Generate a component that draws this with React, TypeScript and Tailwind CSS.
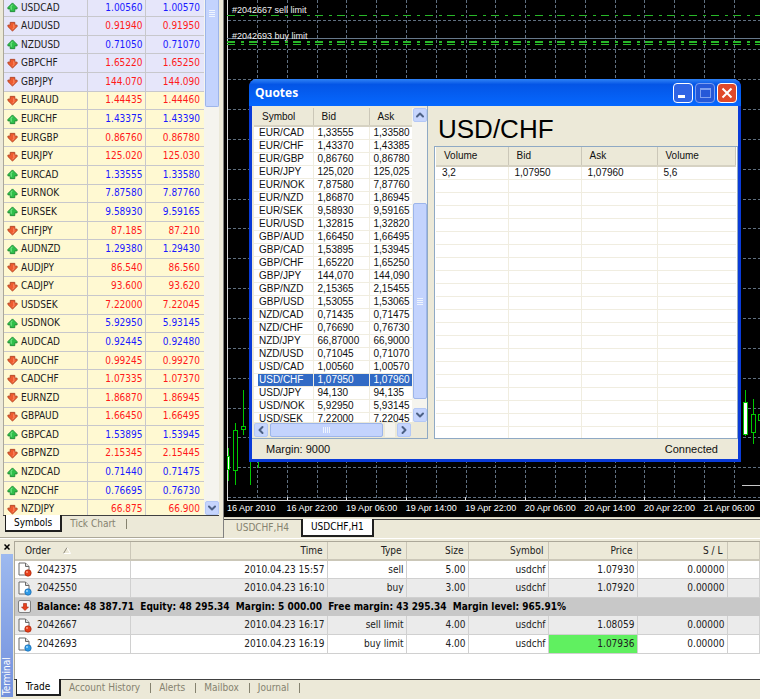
import clsx from "clsx";
import { ReactNode } from "react";
import {
  FiChevronDown,
  FiChevronLeft,
  FiChevronRight,
  FiChevronUp,
} from "react-icons/fi";

type Direction = "up" | "down";

interface WatchRow {
  symbol: string;
  bid: string;
  ask: string;
  dir: Direction;
}

interface Order {
  id: string;
  time: string;
  type: string;
  size: string;
  price: string;
  side: "sell" | "buy";
  hit?: boolean;
}

const up = (symbol: string, bid: string, ask: string): WatchRow => ({
  symbol,
  bid,
  ask,
  dir: "up",
});
const down = (symbol: string, bid: string, ask: string): WatchRow => ({
  symbol,
  bid,
  ask,
  dir: "down",
});

const majors = [
  up("USDCAD", "1.00560", "1.00570"),
  down("AUDUSD", "0.91940", "0.91950"),
  up("NZDUSD", "0.71050", "0.71070"),
  down("GBPCHF", "1.65220", "1.65250"),
  down("GBPJPY", "144.070", "144.090"),
];

const crosses = [
  down("EURAUD", "1.44435", "1.44460"),
  up("EURCHF", "1.43375", "1.43390"),
  down("EURGBP", "0.86760", "0.86780"),
  down("EURJPY", "125.020", "125.030"),
  up("EURCAD", "1.33555", "1.33580"),
  up("EURNOK", "7.87580", "7.87760"),
  up("EURSEK", "9.58930", "9.59165"),
  down("CHFJPY", "87.185", "87.210"),
  up("AUDNZD", "1.29380", "1.29430"),
  down("AUDJPY", "86.540", "86.560"),
  down("CADJPY", "93.600", "93.620"),
  down("USDSEK", "7.22000", "7.22045"),
  up("USDNOK", "5.92950", "5.93145"),
  up("AUDCAD", "0.92445", "0.92480"),
  down("AUDCHF", "0.99245", "0.99270"),
  down("CADCHF", "1.07335", "1.07370"),
  down("EURNZD", "1.86870", "1.86945"),
  down("GBPAUD", "1.66450", "1.66495"),
  up("GBPCAD", "1.53895", "1.53945"),
  down("GBPNZD", "2.15345", "2.15445"),
  up("NZDCAD", "0.71440", "0.71475"),
  up("NZDCHF", "0.76695", "0.76730"),
  down("NZDJPY", "66.875", "66.900"),
];

const quotes = [
  ["EUR/CAD", "1,33555", "1,33580"],
  ["EUR/CHF", "1,43370", "1,43385"],
  ["EUR/GBP", "0,86760", "0,86780"],
  ["EUR/JPY", "125,020", "125,025"],
  ["EUR/NOK", "7,87580", "7,87760"],
  ["EUR/NZD", "1,86870", "1,86945"],
  ["EUR/SEK", "9,58930", "9,59165"],
  ["EUR/USD", "1,32815", "1,32820"],
  ["GBP/AUD", "1,66450", "1,66495"],
  ["GBP/CAD", "1,53895", "1,53945"],
  ["GBP/CHF", "1,65220", "1,65250"],
  ["GBP/JPY", "144,070", "144,090"],
  ["GBP/NZD", "2,15365", "2,15455"],
  ["GBP/USD", "1,53055", "1,53065"],
  ["NZD/CAD", "0,71435", "0,71475"],
  ["NZD/CHF", "0,76690", "0,76730"],
  ["NZD/JPY", "66,87000", "66,9000"],
  ["NZD/USD", "0,71045", "0,71070"],
  ["USD/CAD", "1,00560", "1,00570"],
  ["USD/CHF", "1,07950", "1,07960"],
  ["USD/JPY", "94,130", "94,135"],
  ["USD/NOK", "5,92950", "5,93145"],
  ["USD/SEK", "7,22000", "7,22045"],
];

const positions: Order[] = [
  { id: "2042375", time: "2010.04.23 15:57", type: "sell", size: "5.00", price: "1.07930", side: "sell" },
  { id: "2042550", time: "2010.04.23 16:10", type: "buy", size: "3.00", price: "1.07920", side: "buy" },
];

const pending: Order[] = [
  { id: "2042667", time: "2010.04.23 16:17", type: "sell limit", size: "4.00", price: "1.08059", side: "sell" },
  { id: "2042693", time: "2010.04.23 16:19", type: "buy limit", size: "4.00", price: "1.07936", side: "buy", hit: true },
];

const timeLabels = [
  "16 Apr 2010",
  "16 Apr 22:00",
  "19 Apr 06:00",
  "19 Apr 14:00",
  "19 Apr 22:00",
  "20 Apr 06:00",
  "20 Apr 14:00",
  "20 Apr 22:00",
  "21 Apr 06:00",
];

const range = (n: number) => Array.from({ length: n }, (_, i) => i);

const ArrowIcon = ({ dir }: { dir: Direction }) => (
  <svg viewBox="0 0 12 12" className="block size-[11px]">
    <g transform={dir === "down" ? "rotate(180 6 6)" : undefined}>
      <path
        d="M6 1 L11 6 V7.5 H8.5 V10.5 H3.5 V7.5 H1 V6 Z"
        fill={dir === "up" ? "#2fc04a" : "#ee5a2e"}
        stroke={dir === "up" ? "#1f8a35" : "#b0401f"}
        strokeWidth="1"
        strokeLinejoin="round"
      />
      <path
        d="M6 3 L4.5 4.6 V8.5"
        fill="none"
        stroke={dir === "up" ? "#8df09c" : "#ff9a78"}
        strokeWidth="1"
      />
    </g>
  </svg>
);

const OrderIcon = ({ side }: { side: "sell" | "buy" }) => (
  <svg viewBox="0 0 14 15" className="block h-[15px] w-3.5">
    <path
      d="M1 1 H7.5 L11 4.5 V13 H1 Z"
      fill="#fff"
      stroke="#6b6b6b"
      strokeWidth="1"
      strokeLinejoin="round"
    />
    <path d="M7.5 1 V4.5 H11" fill="#ddd" stroke="#6b6b6b" strokeWidth="1" />
    <circle
      cx="10"
      cy="11"
      r="3.2"
      fill={side === "sell" ? "#e8401c" : "#2e9ae6"}
      stroke={side === "sell" ? "#a52408" : "#1565ad"}
      strokeWidth="0.7"
    />
    <circle cx="9" cy="10" r="1" fill={side === "sell" ? "#ff9d80" : "#a4dcff"} />
  </svg>
);

const ScrollButton = ({ label, children }: { label: string; children: ReactNode }) => (
  <button
    aria-label={label}
    className="flex size-[14px] shrink-0 items-center justify-center rounded-xs border border-[#b4c8f6] bg-[#c6d5fd] text-[#4d6185]"
  >
    {children}
  </button>
);

interface TabsProps {
  active: string;
  others: string[];
}

const PanelTabs = ({ active, others }: TabsProps) => (
  <div className="flex h-[18px] items-start border-t border-[#404040] pl-0.5 text-[10px] leading-[16px]">
    <button className="-mt-px h-[17px] min-w-[45px] border-r-2 border-b-2 border-l border-[#202020] bg-white px-2 text-black">
      {active}
    </button>
    {others.map((tab) => (
      <button
        key={tab}
        className="flex items-center pl-2 text-[#85826f] after:ml-2.5 after:h-2.5 after:w-px after:bg-[#85826f]"
      >
        {tab}
      </button>
    ))}
  </div>
);

const WatchRows = ({ rows, className }: { rows: WatchRow[]; className: string }) => (
  <tbody className={className}>
    {rows.map(({ symbol, bid, ask, dir }) => (
      <tr
        key={symbol}
        className={clsx(
          "border-b border-[#c8c8cc]",
          dir === "up" ? "text-[#1a1aff]" : "text-[#ff1a1a]"
        )}
      >
        <td className="border-r border-[#c8c8cc] p-0 text-[#202020]">
          <div className="flex items-center gap-[3px] pl-[3px]">
            <ArrowIcon dir={dir} /> {symbol}
          </div>
        </td>
        <td className="border-r border-[#c8c8cc] p-0 pr-0.5 text-right">{bid}</td>
        <td className="p-0 pr-1 text-right">{ask}</td>
      </tr>
    ))}
  </tbody>
);

const MarketWatch = () => (
  <section className="flex w-[223px] shrink-0 flex-col border-b border-[#aca899] pr-1 pb-1 pl-[3px]">
    <div className="flex min-h-0 flex-1 overflow-hidden border-l border-[#aca899]">
      <div className="min-w-0 flex-1 overflow-hidden bg-[#fff9d2]">
        <table className="-mt-px h-[520px] w-full table-fixed border-collapse text-[10px] leading-[12px]">
          <colgroup>
            <col className="w-[83px]" />
            <col className="w-[58px]" />
            <col />
          </colgroup>
          <WatchRows rows={majors} className="bg-[#e6e6fa]" />
          <WatchRows rows={crosses} className="bg-[#fff9d2]" />
        </table>
      </div>
      <div className="flex w-[15px] flex-col items-center bg-[#f5f4ee]">
        <div className="flex h-[107px] w-3.5 items-start justify-center rounded-b-xs border-x border-b border-[#9db5ea] bg-[#c3d3fd] pt-2.5">
          <div className="flex flex-col gap-px">
            {range(4).map((i) => (
              <i key={i} className="h-px w-1.5 bg-[#eef4fe]" />
            ))}
          </div>
        </div>
        <div className="flex-1" />
        <ScrollButton label="Scroll down">
          <FiChevronDown size={12} strokeWidth={4} />
        </ScrollButton>
      </div>
    </div>
    <PanelTabs active="Symbols" others={["Tick Chart"]} />
  </section>
);

const ChartPlot = () => (
  <svg className="absolute inset-0 size-full" shapeRendering="crispEdges">
    <g stroke="#5f6f80" strokeWidth="1" strokeDasharray="3 2">
      {range(18).map((i) => {
        const x = Math.round(30 + i * 29.8) + 0.5;
        return <line key={x} x1={x} y1="0" x2={x} y2="499" />;
      })}
      {range(17).map((i) => {
        const y = Math.round(19.5 + i * 29.85) + 0.5;
        return <line key={y} x1="1" y1={y} x2="100%" y2={y} />;
      })}
    </g>
    <line x1="0.5" y1="0" x2="0.5" y2="100%" stroke="#d8d8d8" />
    <g stroke="#28b828">
      <line x1="0" y1="15.5" x2="100%" y2="15.5" strokeDasharray="8 6 3 5" />
      <line x1="0" y1="42" x2="100%" y2="42" strokeWidth="2" strokeDasharray="8 6 3 5" />
      <line x1="0" y1="44.5" x2="100%" y2="44.5" strokeWidth="1" strokeDasharray="8 6 3 5" />
    </g>
    <line x1="0" y1="38.5" x2="100%" y2="38.5" stroke="#66788a" />
    <g stroke="#00c800" fill="#000">
      <path d="M1.5 448 V481 M8.5 423 V485 M16.5 390 V435 M23.5 455 V485 M31.5 455 V468" />
      <rect x="0.5" y="456.5" width="2" height="13" fill="#fff" />
      <rect x="6.5" y="430.5" width="4" height="40" />
      <rect x="14.5" y="426.5" width="4" height="3" />
      <path d="M518.5 390 V436 M526.5 399 V444" />
      <rect x="516.5" y="402.5" width="4" height="32" fill="#fff" />
      <rect x="524.5" y="414.5" width="4" height="18" />
      <rect x="531.5" y="414.5" width="4" height="6" />
    </g>
    <line x1="515" y1="485.5" x2="100%" y2="485.5" stroke="#c8c8c8" />
    {/* ticks of the time axis */}
    <g stroke="#d8d8d8">
      {range(9).map((i) => {
        const x = Math.round(i * 59.6) + 0.5;
        return <line key={x} x1={x} y1="497" x2={x} y2="100%" />;
      })}
    </g>
    <g fill="#f0f0f0" fontSize="9" fontFamily="'Liberation Sans', sans-serif">
      <text x="5" y="13">#2042667 sell limit</text>
      <text x="5" y="39">#2042693 buy limit</text>
    </g>
  </svg>
);

const headCell = "border-r border-[#cbc7b8] p-0 text-left font-normal";

const QuotesList = () => (
  <div className="flex w-[176px] shrink-0 flex-col border-r border-b border-[#8fa9c4] pt-0.5 pl-0.5">
    <div className="flex min-h-0 flex-1 overflow-hidden">
      <div className="min-w-0 flex-1 overflow-hidden bg-white">
        <table className="w-full table-fixed border-collapse">
          <colgroup>
            <col className="w-[59px]" />
            <col className="w-14" />
            <col />
          </colgroup>
          <thead className="bg-[#ece9d8]">
            <tr className="h-[18px] border-b-2 border-[#d6d2c2]">
              <th className={clsx(headCell, "pl-2")}>Symbol</th>
              <th className={clsx(headCell, "pl-2")}>Bid</th>
              <th className="p-0 pl-2 text-left font-normal">Ask</th>
            </tr>
          </thead>
          <tbody>
            {quotes.map(([symbol, bid, ask]) => {
              const selected = symbol === "USD/CHF";
              return (
                <tr
                  key={symbol}
                  className={clsx(
                    "h-[13px] border-b border-[#f0ede0]",
                    selected && "text-white"
                  )}
                >
                  <td className="border-r border-[#f0ede0] p-0 pl-1">
                    <div className={clsx("pl-px", selected && "bg-[#316ac5]")}>{symbol}</div>
                  </td>
                  <td className={clsx("border-r border-[#f0ede0] p-0 pl-1", selected && "bg-[#316ac5]")}>
                    {bid}
                  </td>
                  <td className={clsx("p-0 pl-1 whitespace-nowrap", selected && "bg-[#316ac5]")}>
                    {ask}
                  </td>
                </tr>
              );
            })}
          </tbody>
        </table>
      </div>
      <div className="flex w-[15px] flex-col items-center bg-[#f5f4ee]">
        <ScrollButton label="Scroll up">
          <FiChevronUp size={12} strokeWidth={4} />
        </ScrollButton>
        <div className="grow-[81] basis-0" />
        <div className="flex w-3.5 grow-[193] basis-0 flex-col items-center justify-center gap-px rounded-xs border border-[#9db5ea] bg-[#c3d3fd]">
          {range(4).map((i) => (
            <i key={i} className="h-px w-1.5 bg-[#eef4fe]" />
          ))}
        </div>
        <div className="grow-[9] basis-0" />
        <ScrollButton label="Scroll down">
          <FiChevronDown size={12} strokeWidth={4} />
        </ScrollButton>
      </div>
    </div>
    <div className="flex h-4 items-center gap-0.5 pr-4">
      <ScrollButton label="Scroll left">
        <FiChevronLeft size={12} strokeWidth={4} />
      </ScrollButton>
      <div className="flex h-3.5 grow-[10] items-center justify-center gap-px rounded-xs border border-[#9db5ea] bg-[#c3d3fd]">
        {range(4).map((i) => (
          <i key={i} className="h-1.5 w-px bg-[#eef4fe]" />
        ))}
      </div>
      <div className="h-3.5 grow bg-[#f5f4ee]" />
      <ScrollButton label="Scroll right">
        <FiChevronRight size={12} strokeWidth={4} />
      </ScrollButton>
    </div>
  </div>
);

const Depth = () => (
  <div className="flex min-w-0 flex-1 flex-col pl-1.5">
    <h2 className="flex h-10 items-end pl-1 text-[26px] leading-[34px] text-black">
      USD/CHF
    </h2>
    <div className="min-h-0 flex-1 overflow-hidden border border-[#8fa9c4] bg-white px-px">
      <table className="w-full table-fixed border-collapse">
        <colgroup>
          <col className="w-[72px]" />
          <col className="w-[73px]" />
          <col className="w-[76px]" />
          <col />
        </colgroup>
        <thead className="bg-[#ece9d8]">
          <tr className="h-[19px] border-b-2 border-[#d6d2c2]">
            {["Volume", "Bid", "Ask", "Volume"].map((name, i) => (
              <th key={i} className={clsx(headCell, "pl-2")}>
                {name}
              </th>
            ))}
          </tr>
        </thead>
        <tbody>
          {range(22).map((row) => (
            <tr key={row} className="h-[13px] border-b border-[#f0ede0]">
              {["3,2", "1,07950", "1,07960", "5,6"].map((value, i) => (
                <td key={i} className="border-r border-[#f0ede0] p-0 pl-1.5 last:border-r-0">
                  {row === 0 && value}
                </td>
              ))}
            </tr>
          ))}
        </tbody>
      </table>
    </div>
  </div>
);

const QuotesWindow = () => (
  <section className="absolute top-[79px] right-[19px] bottom-[38px] left-[22px] flex flex-col rounded-t-lg border-x-3 border-b-3 border-[#0a3bd8] bg-[#ece9d8] font-['Liberation_Sans',sans-serif] text-[10px] leading-[12px] text-[#101010]">
    <header className="-mx-[3px] flex h-[27px] items-center gap-0.5 rounded-t-lg bg-linear-to-b from-[#2f82f5] via-[#0455e6] via-20% to-[#0668ff] pr-1 pl-1.5">
      <h1 className="flex-1 font-['Open_Sans',sans-serif] text-[12px] font-bold text-white">
        Quotes
      </h1>
      <button aria-label="Minimize" className="flex size-5 items-end rounded-sm border border-white bg-[#2f64e4] pb-1 pl-1">
        <i className="h-[3px] w-[7px] bg-white" />
      </button>
      <button aria-label="Maximize" disabled className="flex size-5 items-center justify-center rounded-sm border border-[#7d9ff0] bg-[#2558d8]">
        <i className="h-2.5 w-[11px] border border-t-2 border-[#7d9ff0]" />
      </button>
      <button aria-label="Close" className="flex size-5 items-center justify-center rounded-sm border border-white bg-[#e0492a]">
        <svg viewBox="0 0 12 12" className="size-3">
          <path d="M1.5 1.5 L10.5 10.5 M10.5 1.5 L1.5 10.5" stroke="#fff" strokeWidth="2" />
        </svg>
      </button>
    </header>
    <div className="flex min-h-0 flex-1">
      <QuotesList />
      <Depth />
    </div>
    <footer className="flex h-5 items-center justify-between pr-5 pl-3.5 text-[11px]">
      <span>Margin: 9000</span>
      <span>Connected</span>
    </footer>
  </section>
);

const Chart = () => (
  <section className="flex min-w-0 flex-1 flex-col border-l border-[#808080]">
    <div className="flex min-h-0 flex-1 flex-col overflow-hidden border-b border-[#d6d2c2] bg-black pl-[3px]">
      <div className="relative min-h-0 flex-1 border-b border-[#d8d8d8]">
        <ChartPlot />
        <QuotesWindow />
      </div>
      <div className="grid h-4 w-[536px] grid-cols-9 font-['Liberation_Sans',sans-serif] text-[9px] leading-[15px] whitespace-nowrap text-white">
        {timeLabels.map((label) => (
          <span key={label}>{label}</span>
        ))}
      </div>
    </div>
    <div className="mt-px flex h-[19px] items-start border-t border-[#404040] text-[10px] leading-[16px]">
      <button className="w-[77px] text-[#85826f]">USDCHF,H4</button>
      <button className="-mt-px h-[18px] border-r-2 border-b-2 border-l-2 border-[#202020] bg-white px-2 text-black">
        USDCHF,H1
      </button>
    </div>
  </section>
);

const OrderRows = ({ rows, shadedFirst }: { rows: Order[]; shadedFirst?: boolean }) => (
  <>
    {rows.map((o, i) => (
      <tr
        key={o.id}
        className={clsx(
          "h-[18px] border-b border-[#d0d0d0] [&>td]:border-r [&>td]:border-[#d0d0d0] [&>td]:p-0 [&>td]:pr-0.5",
          (i === 0) === !!shadedFirst ? "bg-[#ebebeb]" : "bg-white"
        )}
      >
        <td>
          <div className="flex items-center gap-[5px] pl-[3px] text-left">
            <OrderIcon side={o.side} /> {o.id}
          </div>
        </td>
        <td>{o.time}</td>
        <td>{o.type}</td>
        <td>{o.size}</td>
        <td>usdchf</td>
        <td className={o.hit ? "bg-[#60f060]" : ""}>{o.price}</td>
        <td>0.00000</td>
        <td />
      </tr>
    ))}
  </>
);

const Terminal = () => (
  <section className="flex shrink-0 border-t border-white">
    <aside className="flex w-3.5 flex-col px-px pb-0.5">
      <button aria-label="Close terminal" className="flex h-[15px] items-center justify-center">
        <svg viewBox="0 0 6 6" className="size-1.5">
          <path d="M0.5 0.5 L5.5 5.5 M5.5 0.5 L0.5 5.5" stroke="#000" strokeWidth="1.5" />
        </svg>
      </button>
      <div className="flex flex-1 rotate-180 items-center bg-linear-to-t from-[#9db9ef] to-[#7391dd] pt-0.5 text-[10px] leading-[12px] text-white [writing-mode:vertical-rl]">
        Terminal
      </div>
    </aside>
    <div className="flex min-w-0 flex-1 flex-col pt-0.5">
      <div className="h-[138px] border-t border-l border-[#aca899] bg-white">
        <table className="h-[112px] w-full table-fixed border-collapse text-right text-[10px] leading-[12px] text-[#202020]">
          <colgroup>
            <col className="w-[115px]" />
            <col className="w-[197px]" />
            <col className="w-[79px]" />
            <col className="w-[62px]" />
            <col className="w-20" />
            <col className="w-[89px]" />
            <col className="w-[90px]" />
            <col />
          </colgroup>
          <thead className="bg-[#ece9d8]">
            <tr className="h-[18px] border-b-2 border-[#cbc7b8] [&>th]:border-r [&>th]:border-[#cbc7b8] [&>th]:p-0 [&>th]:pr-1 [&>th]:font-normal">
              <th>
                <div className="flex items-center gap-3 pl-2.5">
                  Order
                  <svg viewBox="0 0 8 7" className="h-[7px] w-2">
                    <path d="M0.5 6.5 L4 0.5" stroke="#8c8879" />
                    <path d="M4 0.5 L7.5 6.5 H0.5" stroke="#fff" fill="none" />
                  </svg>
                </div>
              </th>
              <th>Time</th>
              <th>Type</th>
              <th>Size</th>
              <th>Symbol</th>
              <th>Price</th>
              <th>S / L</th>
              <th />
            </tr>
          </thead>
          <tbody>
            <OrderRows rows={positions} />
            <tr className="h-[18px] bg-[#c8c8c8] font-bold text-black">
              <td colSpan={8} className="p-0">
                <div className="flex items-center gap-1.5 pl-[3px] whitespace-pre">
                  <span className="flex size-[13px] items-center justify-center rounded-xs border border-[#808080] bg-[#f4f4f4]">
                    <svg viewBox="0 0 8 8" className="size-2">
                      <path d="M4 7.5 L0.5 4 H2.5 V0.5 H5.5 V4 H7.5 Z" fill="#e8401c" stroke="#a52408" strokeWidth="0.6" />
                    </svg>
                  </span>
                  {"Balance: 48 387.71  Equity: 48 295.34  Margin: 5 000.00  Free margin: 43 295.34  Margin level: 965.91%"}
                </div>
              </td>
            </tr>
            <OrderRows rows={pending} shadedFirst />
          </tbody>
        </table>
      </div>
      <div className="pb-0.5">
        <PanelTabs active="Trade" others={["Account History", "Alerts", "Mailbox", "Journal"]} />
      </div>
    </div>
  </section>
);

export default function App() {
  return (
    <div className="flex h-screen flex-col overflow-hidden bg-[#ece9d8] font-['DejaVu_Sans_Condensed','DejaVu_Sans',sans-serif]">
      <main className="flex min-h-0 flex-1">
        <MarketWatch />
        <Chart />
      </main>
      <Terminal />
    </div>
  );
}
